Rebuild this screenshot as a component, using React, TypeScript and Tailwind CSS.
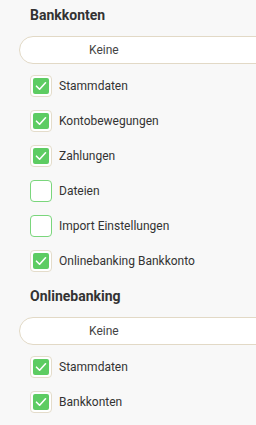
import React from 'react';

type Item = { label: string; checked: boolean };

const sections: { title: string; items: Item[] }[] = [
  {
    title: 'Bankkonten',
    items: [
      { label: 'Stammdaten', checked: true },
      { label: 'Kontobewegungen', checked: true },
      { label: 'Zahlungen', checked: true },
      { label: 'Dateien', checked: false },
      { label: 'Import Einstellungen', checked: false },
      { label: 'Onlinebanking Bankkonto', checked: true },
    ],
  },
  {
    title: 'Onlinebanking',
    items: [
      { label: 'Stammdaten', checked: true },
      { label: 'Bankkonten', checked: true },
    ],
  },
];

const Checkbox: React.FC<{ checked: boolean }> = ({ checked }) =>
  checked ? (
    <div className="w-[22px] h-[22px] shrink-0 rounded-[4px] border border-[#e4dccb] bg-white p-[2px]">
      <div className="w-full h-full rounded-[2px] bg-[#5dcc62] flex items-center justify-center">
        <svg width="12" height="12" viewBox="0 0 12 12" fill="none">
          <path d="M1.5 6.2 L4.6 9.2 L10.5 2.8" stroke="white" strokeWidth="1.6" strokeLinecap="round" strokeLinejoin="round" />
        </svg>
      </div>
    </div>
  ) : (
    <div className="w-[22px] h-[22px] shrink-0 rounded-[4px] border-[1.5px] border-[#7ad67c] bg-white" />
  );

export default function App() {
  return (
    <div className="min-h-screen bg-[#f8f8f8] pt-[5px] pl-[19px] overflow-hidden font-['Roboto',sans-serif] text-[#333]">
      {sections.map((s, i) => (
        <div key={s.title} className={i > 0 ? 'mt-[14px]' : ''}>
          <h2 className="pl-[11px] text-[14px] leading-[20px] font-bold text-[#333]">{s.title}</h2>
          <div className="mt-[11px] w-[300px] h-[28px] rounded-full border border-[#e2d9c6] bg-white flex items-center pl-[69px] text-[12px] text-[#444]">
            Keine
          </div>
          <div className="mt-[11px] pl-[11px] flex flex-col gap-[13px]">
            {s.items.map((it) => (
              <div key={it.label} className="flex items-center gap-[7px] h-[22px]">
                <Checkbox checked={it.checked} />
                <span className="text-[12px] text-[#333]">{it.label}</span>
              </div>
            ))}
          </div>
        </div>
      ))}
    </div>
  );
}
